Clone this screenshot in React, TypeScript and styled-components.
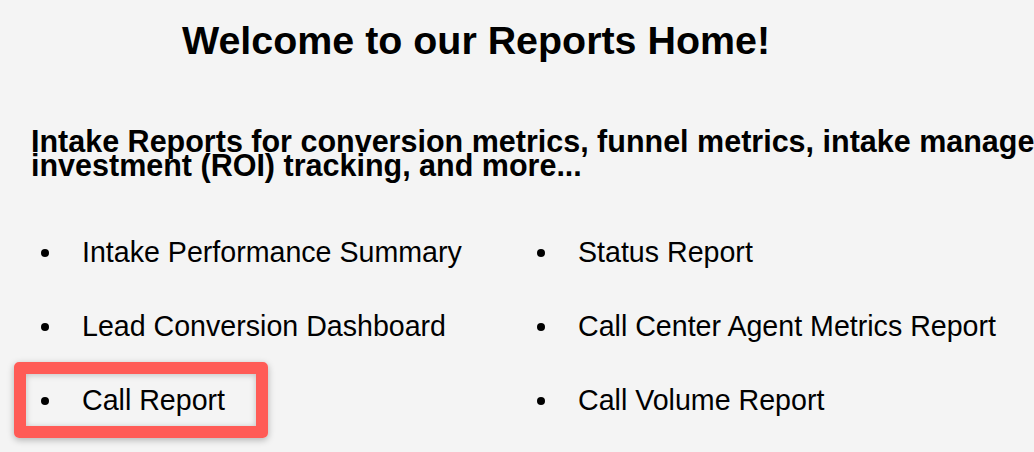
import styled, { createGlobalStyle, css } from "styled-components";

type Report = {
  name: string;
  highlighted?: boolean;
};

const reports: Report[] = [
  { name: "Intake Performance Summary" },
  { name: "Status Report" },
  { name: "Lead Conversion Dashboard" },
  { name: "Call Center Agent Metrics Report" },
  { name: "Call Report", highlighted: true },
  { name: "Call Volume Report" },
];

export default function App() {
  return (
    <>
      <GlobalStyle />
      <Page>
        <Title>Welcome to our Reports Home!</Title>
        <Intro>
          Intake Reports for conversion metrics, funnel metrics, intake
          management, and return on investment (ROI) tracking, and more...
        </Intro>
        <ReportList>
          {reports.map((report) => (
            <ReportItem key={report.name} $highlighted={report.highlighted}>
              <Bullet />
              <span>{report.name}</span>
            </ReportItem>
          ))}
        </ReportList>
      </Page>
    </>
  );
}

const GlobalStyle = createGlobalStyle`
  html, body {
    margin: 0;
    padding: 0;
    background: #f4f4f4;
    overflow: hidden;
  }

  body {
    color: #000;
    font-family: "Liberation Sans", Arial, Helvetica, sans-serif;
  }
`;

const Page = styled.main`
  display: flex;
  flex-direction: column;
  padding: 21px 0 0 31px;
  width: 1400px;
  height: 452px;
  box-sizing: border-box;
`;

const Title = styled.h1`
  margin: 0;
  width: 890px;
  font-size: 39.4px;
  font-weight: 700;
  line-height: 39px;
  text-align: center;
`;

const Intro = styled.h2`
  margin: 69px 0 0;
  width: 1320px;
  font-size: 30.5px;
  font-weight: 700;
  line-height: 24px;
`;

const ReportList = styled.ul`
  display: grid;
  grid-template-columns: 496px 496px;
  row-gap: 40px;
  margin: 58px 0 0 10px;
  padding: 0;
  list-style: none;
`;

const ReportItem = styled.li<{ $highlighted?: boolean }>`
  position: relative;
  display: flex;
  align-items: center;
  gap: 33px;
  font-size: 28.6px;
  line-height: 34px;

  ${({ $highlighted }) =>
    $highlighted &&
    css`
      &::after {
        content: "";
        position: absolute;
        left: -27px;
        top: -21px;
        width: 254px;
        height: 76px;
        box-sizing: border-box;
        border: 12px solid #ff5b56;
        border-radius: 5px;
        box-shadow: 0 2px 7px rgba(0, 0, 0, 0.28),
          inset 0 1px 6px rgba(0, 0, 0, 0.22);
        pointer-events: none;
      }
    `}
`;

const Bullet = styled.i`
  flex: none;
  width: 8px;
  height: 8px;
  margin-top: 2px;
  border-radius: 50%;
  background: #000;
`;
